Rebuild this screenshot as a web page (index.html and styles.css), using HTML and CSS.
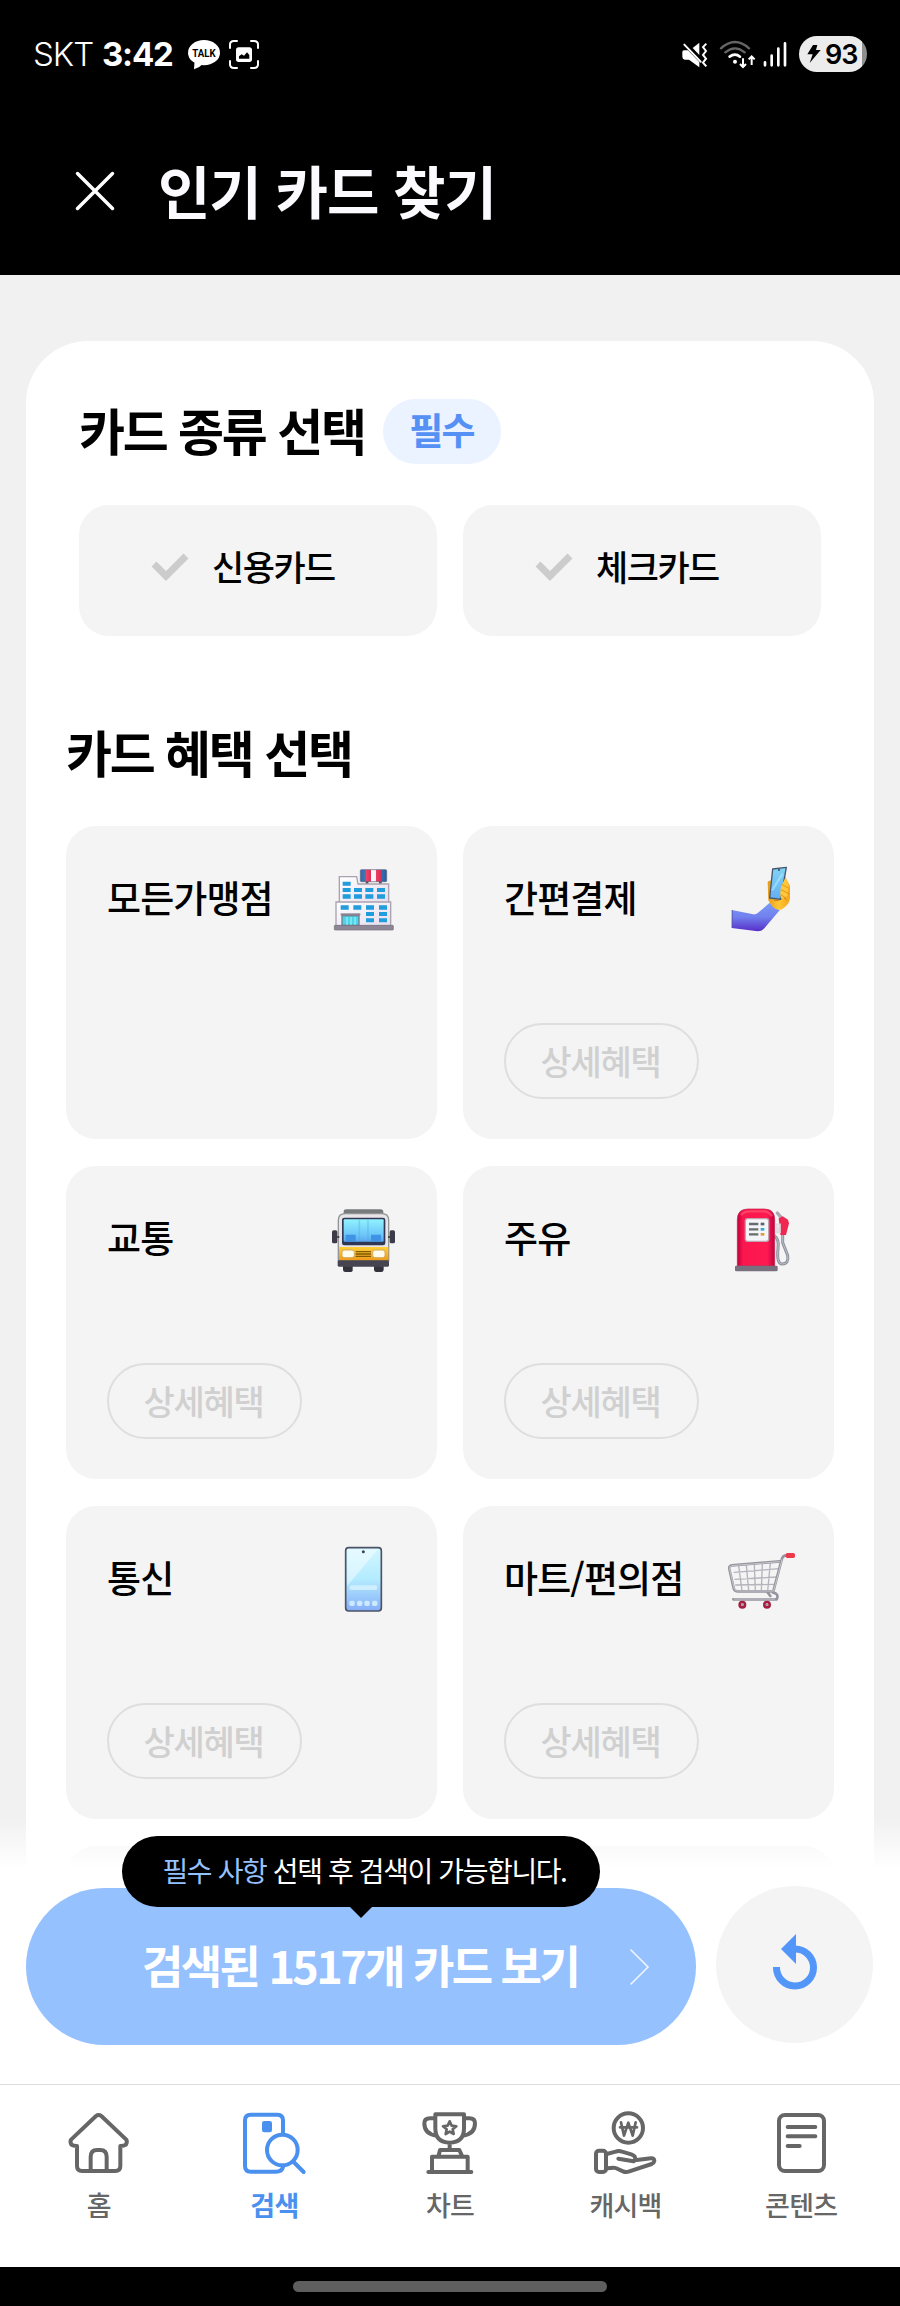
FILE: index.html
```html
<!DOCTYPE html>
<html lang="ko">
<head>
  <meta charset="UTF-8">
  <meta name="viewport" content="width=device-width, initial-scale=1.0">
  <title>인기 카드 찾기</title>
  <link rel="stylesheet" href="styles.css">
</head>
<body>
<div class="app">

  <!-- 상태바 -->
  <div class="status-bar">
    <span class="carrier">SKT</span>
    <span class="time">3:42</span>
    <svg class="ico-talk" viewBox="564 117 96 93">
      <ellipse cx="612" cy="158" rx="48" ry="38" fill="#fff"/>
      <path d="M584 180L582 208Q598 204 608 192Z" fill="#fff"/>
      <text x="612" y="170" text-anchor="middle" textLength="70" lengthAdjust="spacingAndGlyphs">TALK</text>
    </svg>
    <svg class="ico-capture" viewBox="684 117 96 93">
      <path d="M690 144V134Q690 123 702 123H711M753 123H762Q774 123 774 134V144M774 183V193Q774 204 762 204H753M711 204H702Q690 204 690 193V183" fill="none" stroke="#fff" stroke-width="6" stroke-linecap="round"/>
      <rect x="708" y="142" width="48" height="44" rx="8" fill="#fff"/>
      <path d="M717 176V169L725 163L732 167L741 157L748 165V176Z" fill="#000"/>
    </svg>
    <div class="status-right">
      <svg class="ico-mute" viewBox="696 117 78 81">
        <path d="M702 145H714L748 180V196L717 173H704Q697 171 697 164V150Q697 145 702 145Z" fill="#fff"/>
        <path d="M748 122V159L728 138Z" fill="#fff"/>
        <path d="M703 128L752 179" stroke="#fff" stroke-width="6" stroke-linecap="round"/>
        <path d="M769 125L759 135L768 147L759 159L768 170L759 182L769 193" fill="none" stroke="#fff" stroke-width="6"/>
      </svg>
      <svg class="ico-wifi" viewBox="807 117 111 87">
        <path d="M813 142Q855 104 897 142M826 154Q855 130 884 154" fill="none" stroke="#666" stroke-width="7" stroke-linecap="round"/>
        <path d="M839 167Q855 155 870 167" fill="none" stroke="#fff" stroke-width="8" stroke-linecap="round"/>
        <circle cx="855" cy="182" r="6" fill="#fff"/>
        <path d="M879 172V197M870 189L879 198L888 189M905 192V167M896 175L905 166L914 175" fill="none" stroke="#fff" stroke-width="6"/>
      </svg>
      <svg class="ico-signal" viewBox="939 120 75 78">
        <path d="M945 184V193M965 164V193M985 143V193M1005 127V193" stroke="#fff" stroke-width="8" stroke-linecap="round"/>
      </svg>
      <div class="battery">
        <svg viewBox="1070 134 42 54"><path d="M1088 134H1101L1097 149H1111L1078 188L1087 162H1071Z" fill="#000"/></svg>
        <span>93</span>
      </div>
    </div>
  </div>

  <!-- 헤더 -->
  <header class="header">
    <svg class="close" viewBox="0 0 40 40"><path d="M2.500 2.500L37.500 37.500M37.500 2.500L2.500 37.500"/></svg>
    <h1>인기 카드 찾기</h1>
  </header>

  <!-- 본문 -->
  <main class="content">
    <section class="panel">
      <div class="type-section">
        <div class="title-row">
          <h2>카드 종류 선택</h2>
          <span class="badge">필수</span>
        </div>
        <div class="type-grid">
          <button class="type-btn">
            <svg viewBox="0 0 38 30"><path d="M3 12L15 24L35 4"/></svg>
            <span>신용카드</span>
          </button>
          <button class="type-btn">
            <svg viewBox="0 0 38 30"><path d="M3 12L15 24L35 4"/></svg>
            <span>체크카드</span>
          </button>
        </div>
      </div>

      <h2 class="benefit-title">카드 혜택 선택</h2>
      <div class="benefit-grid">
        <div class="benefit">
          <span class="name">모든가맹점</span>
          <svg class="emoji" viewBox="87 78 210 210">
            <defs>
              <linearGradient id="wall" x2="1" y2="1"><stop offset="0" stop-color="#fff"/><stop offset="1" stop-color="#e5dced"/></linearGradient>
              <linearGradient id="sign"><stop offset="0" stop-color="#2e69ad"/><stop offset=".2" stop-color="#4179b5"/><stop offset=".21" stop-color="#ef456c"/><stop offset=".4" stop-color="#e52d55"/><stop offset=".41" stop-color="#fff"/><stop offset=".6" stop-color="#f3edf4"/><stop offset=".61" stop-color="#ed3d66"/><stop offset=".79" stop-color="#d92e53"/><stop offset=".8" stop-color="#3471b4"/><stop offset="1" stop-color="#285ca0"/></linearGradient>
            </defs>
            <path d="M201 122V134M241 122V134" stroke="#554d5e" stroke-width="8"/>
            <rect x="181" y="89" width="79" height="36" rx="3" fill="url(#sign)" stroke="#59637c" stroke-width="2"/>
            <path d="M118 188V110H170L174 132H266V188Z" fill="url(#wall)" stroke="#aaa2ae" stroke-width="4"/>
            <path d="M108 258V186H272V258Z" fill="url(#wall)" stroke="#aaa2ae" stroke-width="4"/>
            <g fill="#219cdc">
              <path d="M128 125h24v12h-24zM128 144h24v12h-24zM128 163h24v13h-24zM162 144h24v12h-24zM162 163h24v13h-24zM196 144h24v12h-24zM196 163h24v13h-24zM231 144h24v12h-24zM231 163h24v13h-24z"/>
              <path d="M122 196h24v13h-24zM160 196h24v13h-24zM198 196h24v13h-24zM237 196h24v13h-24zM198 216h24v12h-24zM237 216h24v12h-24zM198 235h24v12h-24zM237 235h24v12h-24z"/>
            </g>
            <rect x="126" y="227" width="51" height="29" fill="#4fd3ea" stroke="#6f7e8c" stroke-width="4"/>
            <path d="M141 231V255M153 231V255M165 231V255" stroke="#8ef0f5" stroke-width="4"/>
            <path d="M122 223H181" stroke="#8c8492" stroke-width="6"/>
            <rect x="103" y="256" width="177" height="14" rx="2" fill="#8d8696" stroke="#736c7b" stroke-width="2"/>
          </svg>
        </div>

        <div class="benefit">
          <span class="name">간편결제</span>
          <svg class="emoji" viewBox="78 78 210 210">
            <defs>
              <linearGradient id="sleeve" x2="0" y2="1"><stop offset="0" stop-color="#799cf7"/><stop offset=".5" stop-color="#7180ee"/><stop offset="1" stop-color="#572dc9"/></linearGradient>
              <linearGradient id="screen" x2="0" y2="1"><stop offset="0" stop-color="#83d4f4"/><stop offset="1" stop-color="#62aef5"/></linearGradient>
              <linearGradient id="skin"><stop offset="0" stop-color="#e79a16"/><stop offset=".5" stop-color="#ffc735"/><stop offset="1" stop-color="#f3a51d"/></linearGradient>
            </defs>
            <path d="M95 210L160 223Q170 224 176 217L209 188L239 211L193 265Q185 274 173 274L95 264Z" fill="url(#sleeve)"/>
            <path d="M97 210V264" stroke="#5250a5" stroke-width="2"/>
            <path d="M203 126Q209 118 216 124L247 116Q256 103 260 119L270 137V174Q270 194 243 209Q230 212 216 198L205 181Z" fill="url(#skin)"/>
            <path d="M245 131L265 144M244 147L266 162M242 163L260 181M222 181Q235 184 243 177" fill="none" stroke="#d47c12" stroke-width="3"/>
            <path d="M218 87L259 82L242 178L209 174Z" fill="url(#screen)" stroke="#46566f" stroke-width="4" stroke-linejoin="round"/>
            <path d="M216 151L248 101" stroke="#b2ecfb" stroke-width="7" opacity=".55"/>
            <circle cx="237" cy="90" r="3" fill="#38455d"/>
            <path d="M256 113L246 134Q240 144 241 158Q240 170 244 176L262 168L266 134Z" fill="#ffc83a"/>
            <path d="M247 134L264 144M243 149L265 160M243 164L259 175" fill="none" stroke="#d98a16" stroke-width="2.500"/>
          </svg>
          <button class="detail">상세혜택</button>
        </div>

        <div class="benefit">
          <span class="name">교통</span>
          <svg class="emoji" viewBox="87 78 210 210">
            <defs>
              <linearGradient id="busglass" x2="0" y2="1"><stop offset="0" stop-color="#91f2ff"/><stop offset=".7" stop-color="#6cc6f8"/><stop offset="1" stop-color="#5ba5f0"/></linearGradient>
              <linearGradient id="busbody" x2="0" y2="1"><stop offset="0" stop-color="#ffd037"/><stop offset="1" stop-color="#ee991b"/></linearGradient>
            </defs>
            <path d="M131 102V95Q131 88 139 88H242Q250 88 250 96V104Z" fill="#777b7c"/>
            <path d="M115 242V121Q115 101 135 101H246Q266 101 266 121V242Z" fill="#e7e5e8" stroke="#929495" stroke-width="4"/>
            <rect x="126" y="113" width="130" height="83" rx="7" fill="#303752"/>
            <rect x="131" y="118" width="120" height="67" rx="3" fill="url(#busglass)"/>
            <path d="M178 119V184M204 119V184" stroke="#4ea9dd" stroke-width="5" opacity=".35"/>
            <path d="M137 164H167V184H137ZM213 164H243V184H213Z" fill="#3f93e4"/>
            <path d="M117 201H265V242H117Z" fill="url(#busbody)"/>
            <rect x="126" y="210" width="37" height="23" rx="7" fill="#fffbed" stroke="#d5aa5a" stroke-width="3"/>
            <rect x="218" y="210" width="37" height="23" rx="7" fill="#fffbed" stroke="#d5aa5a" stroke-width="3"/>
            <path d="M167 215H213M167 222H213M167 229H213" stroke="#805900" stroke-width="4"/>
            <rect x="113" y="241" width="154" height="19" rx="4" fill="#454450"/>
            <path d="M129 259H158V272Q157 276 151 276H136Q129 276 129 269ZM222 259H251V269Q251 276 244 276H229Q222 276 222 269Z" fill="#34323d"/>
            <path d="M108 171H118M264 171H275" stroke="#30303a" stroke-width="5"/>
            <rect x="96" y="151" width="16" height="39" rx="5" fill="#3c3b48"/><rect x="269" y="151" width="16" height="39" rx="5" fill="#3c3b48"/>
          </svg>
          <button class="detail">상세혜택</button>
        </div>

        <div class="benefit">
          <span class="name">주유</span>
          <svg class="emoji" viewBox="78 78 210 210">
            <defs>
              <linearGradient id="pump"><stop offset="0" stop-color="#bd003c"/><stop offset=".15" stop-color="#fa174e"/><stop offset=".8" stop-color="#ff1a50"/><stop offset="1" stop-color="#bd033d"/></linearGradient>
            </defs>
            <path d="M224 168Q238 178 234 205Q229 252 247 252Q267 252 263 226L248 188V162" fill="none" stroke="#8d919b" stroke-width="9"/>
            <path d="M224 168Q238 178 234 205Q229 252 247 252Q267 252 263 226L248 188V162" fill="none" stroke="#bbc0c8" stroke-width="3"/>
            <path d="M112 258V119Q112 87 144 87H193Q224 87 224 119V258Z" fill="url(#pump)" stroke="#c51b4a" stroke-width="2"/>
            <path d="M123 105Q132 94 152 94H190Q206 94 216 108" fill="none" stroke="#ff5975" stroke-width="7" opacity=".65"/>
            <rect x="136" y="116" width="70" height="68" rx="7" fill="#f4f5f9" stroke="#c2a2b1" stroke-width="4"/>
            <path d="M147 132H175M147 148H175M147 163H175" stroke="#676c6e" stroke-width="7"/>
            <path d="M182 132H193" stroke="#5d626c" stroke-width="8"/><path d="M182 148H193" stroke="#39a7db" stroke-width="8"/><path d="M182 163H193" stroke="#e5993c" stroke-width="8"/>
            <rect x="105" y="257" width="128" height="17" rx="4" fill="#79707f"/>
            <path d="M232 99L244 113" stroke="#a8abb2" stroke-width="10" stroke-linecap="round"/>
            <path d="M236 115L248 109L264 119L267 130L258 165H241Z" fill="#ef2852"/>
            <path d="M230 133H240V157H230ZM236 140V156" fill="none" stroke="#ddd9df" stroke-width="5"/>
          </svg>
          <button class="detail">상세혜택</button>
        </div>

        <div class="benefit">
          <span class="name">통신</span>
          <svg class="emoji" viewBox="87 78 210 210">
            <defs><linearGradient id="phone" x2="0" y2="1"><stop offset="0" stop-color="#d3f7ff"/><stop offset=".5" stop-color="#b3ebff"/><stop offset="1" stop-color="#86aef8"/></linearGradient></defs>
            <rect x="137" y="83" width="107" height="190" rx="9" fill="url(#phone)" stroke="#4c5366" stroke-width="5"/>
            <path d="M142 88H234L142 197Z" fill="#fff" opacity=".45"/>
            <circle cx="190" cy="95" r="4.500" fill="#384253"/>
            <rect x="148" y="196" width="84" height="14" rx="7" fill="#d0effe"/>
            <g fill="#cceaff"><rect x="148" y="242" width="16" height="16" rx="5"/><rect x="171" y="242" width="16" height="16" rx="5"/><rect x="193" y="242" width="16" height="16" rx="5"/><rect x="216" y="242" width="16" height="16" rx="5"/></g>
          </svg>
          <button class="detail">상세혜택</button>
        </div>

        <div class="benefit">
          <span class="name">마트/편의점</span>
          <svg class="emoji" viewBox="78 78 210 210">
            <g fill="none" stroke-linecap="round" stroke-linejoin="round">
              <path d="M103 157L236 146M105 178L231 171M107 195L226 193M116 137L126 212M139 135L146 212M163 133L166 213M187 131L184 213M211 129L203 213" stroke="#b5b3bc" stroke-width="4"/>
              <path d="M260 106Q248 106 245 119L220 214H112Q103 214 101 205L88 147Q86 137 96 136L240 124M219 218Q238 221 230 238H100M202 216L211 228" stroke="#96949e" stroke-width="8"/>
              <path d="M246 119L221 213H112Q104 213 102 204L89 147Q87 138 96 137L239 125M103 237H224" stroke="#c7c5cd" stroke-width="3"/>
            </g>
            <rect x="257" y="99" width="28" height="15" rx="5" fill="#ed3a4a"/>
            <circle cx="127" cy="254" r="8" fill="#eee" stroke="#a51e41" stroke-width="8"/>
            <circle cx="201" cy="254" r="8" fill="#eee" stroke="#a51e41" stroke-width="8"/>
            <circle cx="127" cy="254" r="4" fill="#a899a5"/><circle cx="201" cy="254" r="4" fill="#a899a5"/>
          </svg>
          <button class="detail">상세혜택</button>
        </div>

        <div class="benefit"></div>
        <div class="benefit"></div>
      </div>
    </section>

    <!-- 하단 검색 버튼 -->
    <div class="action-bar">
      <div class="search-wrap">
        <div class="tooltip"><em>필수 사항</em> 선택 후 검색이 가능합니다.</div>
        <button class="search-btn">
          <span>검색된 1517개 카드 보기</span>
          <svg viewBox="0 0 22 38"><path d="M1.500 1.500L19 19L1.500 36.500"/></svg>
        </button>
      </div>
      <button class="reset-btn">
        <svg viewBox="0 0 44 56">
          <path d="M3.500 33A18.500 18.500 0 1 0 22 15" fill="none" stroke="#5396fa" stroke-width="7"/>
          <path d="M23 0V30L8 15Z" fill="#5396fa"/>
        </svg>
      </button>
    </div>
  </main>

  <!-- 탭바 -->
  <nav class="tab-bar">
    <a class="tab">
      <svg viewBox="198 120 198 198">
        <path d="M288 138L214 208Q209 214 214 224Q219 228 231 228V288Q231 303 246 303H346Q361 303 361 288V228Q373 228 378 224Q383 214 378 208L304 138Q296 132 288 138Z"/>
        <path d="M272 302V261Q272 240 291 240H301Q320 240 320 261V302"/>
      </svg>
      <span>홈</span>
    </a>
    <a class="tab active">
      <svg viewBox="726 120 198 198">
        <path d="M852 190V151Q852 134 835 134H755Q738 134 738 151V288Q738 305 755 305H831Q849 305 852 291"/>
        <circle cx="850" cy="240" r="46"/>
        <path d="M884 276L914 306"/>
        <rect class="fill" x="789" y="153" width="30" height="34" rx="7"/>
      </svg>
      <span>검색</span>
    </a>
    <a class="tab">
      <svg viewBox="1251 120 198 198">
        <path d="M1306 133H1392V175Q1392 218 1349 218Q1306 218 1306 175ZM1306 145H1290Q1273 145 1273 160Q1273 193 1310 197M1392 145H1408Q1425 145 1425 160Q1425 193 1388 197M1349 218V240M1315 260L1320 240H1378L1387 260M1296 306V260H1403V306M1285 306H1414"/>
        <path class="thin" d="M1349 154L1355 167L1369 169L1358 178L1361 192L1349 185L1337 192L1340 178L1329 169L1343 167Z"/>
      </svg>
      <span>차트</span>
    </a>
    <a class="tab">
      <svg viewBox="429 120 198 198">
        <circle cx="535" cy="174" r="44"/>
        <path class="won" d="M513 157L522 197L535 158L548 197L557 157M510 172H561"/>
        <rect x="438" y="242" width="30" height="64" rx="9"/>
        <path d="M470 252L497 245Q506 241 516 245L544 253Q560 259 554 271L603 265Q613 264 613 273Q612 279 605 282L538 304Q528 308 519 304L497 294Q493 292 470 295M505 266L551 274"/>
      </svg>
      <span>캐시백</span>
    </a>
    <a class="tab">
      <svg viewBox="954 120 198 198">
        <rect x="987" y="135" width="135" height="168" rx="18"/>
        <path d="M1013 171H1096M1013 199H1096M1013 228H1049"/>
      </svg>
      <span>콘텐츠</span>
    </a>
  </nav>

  <div class="home-bar"><i></i></div>
</div>
</body>
</html>
```

FILE: styles.css
```css
* {
  box-sizing: border-box;
  margin: 0;
  padding: 0;
}

body {
  background-color: #000;
  font-family: 'Noto Sans CJK KR', sans-serif;
  color: #000;
}

button {
  border: none;
  font-family: inherit;
  color: inherit;
}

svg {
  display: block;
  flex-shrink: 0;
}

.app {
  width: 900px;
  height: 2306px;
  display: flex;
  flex-direction: column;
  overflow: hidden;
}

/* 상태바 */
.status-bar {
  height: 108px;
  padding: 0 33px;
  display: flex;
  align-items: center;
  color: #fff;
  font-family: Inter, sans-serif;
  line-height: 1;
}

.carrier {
  width: 69px;
  font-size: 33px;
  font-weight: 300;
  letter-spacing: -1px;
}

.time {
  width: 86px;
  font-size: 33px;
  font-weight: 700;
  letter-spacing: -1.2px;
}

.ico-talk {
  width: 32px;
  height: 31px;
}

.ico-talk text {
  font: 700 32px Roboto, sans-serif;
}

.ico-capture {
  width: 32px;
  height: 31px;
  margin-left: 8px;
}

.status-right {
  display: flex;
  align-items: center;
  margin-left: auto;
}

.ico-mute {
  width: 26px;
  height: 27px;
}

.ico-wifi {
  width: 37px;
  height: 29px;
  margin-left: 11px;
}

.ico-signal {
  width: 25px;
  height: 26px;
  margin-left: 7px;
}

.battery {
  width: 68px;
  height: 36px;
  margin-left: 11px;
  padding-left: 8px;
  display: flex;
  align-items: center;
  gap: 4px;
  border-radius: 18px;
  background: linear-gradient(90deg, #ececec 63px, #8f8f8f 63px);
  color: #000;
  font-size: 27px;
  font-weight: 600;
  letter-spacing: -1px;
}

.battery svg {
  width: 14px;
  height: 18px;
}

/* 헤더 */
.header {
  height: 167px;
  padding: 0 0 1px 75px;
  display: flex;
  align-items: center;
  color: #fafaff;
}

.close {
  width: 40px;
  height: 40px;
  margin-right: 43px;
  fill: none;
  stroke: #fff;
  stroke-width: 3.5;
  stroke-linecap: round;
}

h1 {
  padding-bottom: 3px;
  font-size: 57px;
  font-weight: 700;
  line-height: 1;
  letter-spacing: -1.1px;
}

/* 본문 */
.content {
  position: relative;
  height: 1809px;
  padding: 66px 26px 0;
  background-color: #f1f1f1;
  overflow: hidden;
}

.panel {
  height: 1900px;
  padding: 58px 40px 0;
  border-radius: 62px 62px 0 0;
  background-color: #fff;
}

.type-section {
  padding: 0 13px;
}

.title-row {
  display: flex;
  align-items: center;
  gap: 18px;
  height: 65px;
  margin-bottom: 41px;
}

h2 {
  font-size: 50px;
  font-weight: 700;
  line-height: 61px;
  padding-bottom: 4px;
  letter-spacing: -2.3px;
}

.badge {
  width: 118px;
  height: 65px;
  border-radius: 33px;
  background-color: #eaf3ff;
  color: #5590f5;
  font-size: 37px;
  font-weight: 700;
  line-height: 61px;
  text-align: center;
  letter-spacing: -1.8px;
}

.type-grid {
  display: grid;
  grid-template-columns: 1fr 1fr;
  gap: 26px;
}

.type-btn {
  height: 131px;
  padding: 0 0 7px 72px;
  display: flex;
  align-items: center;
  gap: 23px;
  border-radius: 30px;
  background-color: #f4f4f4;
  font-size: 35px;
  font-weight: 500;
  letter-spacing: -1.5px;
}

.type-btn span {
  padding-bottom: 4px;
}

.type-btn svg {
  width: 38px;
  height: 30px;
  fill: none;
  stroke: #ccc;
  stroke-width: 7;
}

.benefit-title {
  margin: 85px 0 40px;
}

.benefit-grid {
  display: grid;
  grid-template-columns: 1fr 1fr;
  gap: 27px 26px;
}

.benefit {
  height: 313px;
  padding: 40px 38px 40px 41px;
  display: flex;
  flex-wrap: wrap;
  justify-content: space-between;
  align-content: space-between;
  border-radius: 30px;
  background-color: #f4f4f4;
}

.name {
  font-size: 37px;
  font-weight: 500;
  line-height: 62px;
  letter-spacing: -0.9px;
}

.emoji {
  width: 70px;
  height: 70px;
}

.detail {
  width: 195px;
  height: 76px;
  padding-right: 2px;
  border: 2px solid #dedede;
  border-radius: 38px;
  background: none;
  color: #d0d0d0;
  font-size: 34px;
  font-weight: 500;
  line-height: 68px;
  letter-spacing: -1.3px;
}

/* 하단 검색 버튼 */
.action-bar {
  position: absolute;
  left: 0;
  right: 0;
  bottom: 0;
  height: 266px;
  padding: 68px 26px 0 26px;
  display: flex;
  gap: 20px;
  background: linear-gradient(rgba(255, 255, 255, 0), #fff 50px);
}

.search-wrap {
  position: relative;
}

.search-btn {
  width: 670px;
  height: 157px;
  margin-top: 2px;
  padding: 0 45px 0 116px;
  display: flex;
  align-items: center;
  justify-content: space-between;
  border-radius: 79px;
  background-color: #96c1ff;
  color: #fff;
  font-size: 45px;
  font-weight: 700;
  letter-spacing: -2.6px;
}

.search-btn span {
  padding-bottom: 5px;
}

.search-btn svg {
  width: 22px;
  height: 38px;
  fill: none;
  stroke: #fff;
  stroke-width: 1.6;
  opacity: 0.85;
}

.tooltip {
  position: absolute;
  top: -50px;
  left: 96px;
  width: 478px;
  height: 71px;
  padding-left: 7px;
  border-radius: 36px;
  background-color: #000;
  color: #fff;
  font-size: 28px;
  line-height: 69px;
  text-align: center;
  letter-spacing: -1.4px;
  white-space: nowrap;
}

.tooltip em {
  color: #96c1ff;
  font-style: normal;
}

.tooltip::after {
  content: '';
  position: absolute;
  top: 70px;
  left: 50%;
  margin-left: -12px;
  border: 12px solid transparent;
  border-top-color: #000;
  border-bottom: none;
}

.reset-btn {
  width: 157px;
  height: 157px;
  display: flex;
  justify-content: center;
  padding-top: 48px;
  border-radius: 50%;
  background-color: #f4f4f4;
}

.reset-btn svg {
  width: 44px;
  height: 56px;
}

/* 탭바 */
.tab-bar {
  height: 183px;
  padding: 25px 11px 0;
  display: flex;
  border-top: 1px solid #ddd;
  background-color: #fff;
}

.tab {
  flex: 1;
  display: flex;
  flex-direction: column;
  align-items: center;
  color: #666;
  font-size: 27px;
  font-weight: 500;
  line-height: 40px;
  letter-spacing: -0.8px;
}

.tab svg {
  width: 66px;
  height: 66px;
  margin-bottom: 9px;
  fill: none;
  stroke: currentColor;
  stroke-width: 12;
  stroke-linecap: round;
  stroke-linejoin: round;
}

.tab .fill {
  fill: currentColor;
  stroke: none;
}

.tab .thin,
.tab .won {
  stroke-width: 8;
}

.tab.active {
  color: #4a90ee;
  font-weight: 700;
}

.home-bar {
  height: 39px;
  padding-top: 14px;
  background-color: #000;
}

.home-bar i {
  display: block;
  width: 314px;
  height: 11px;
  margin: 0 auto;
  border-radius: 6px;
  background-color: #5e5e5e;
}
```
